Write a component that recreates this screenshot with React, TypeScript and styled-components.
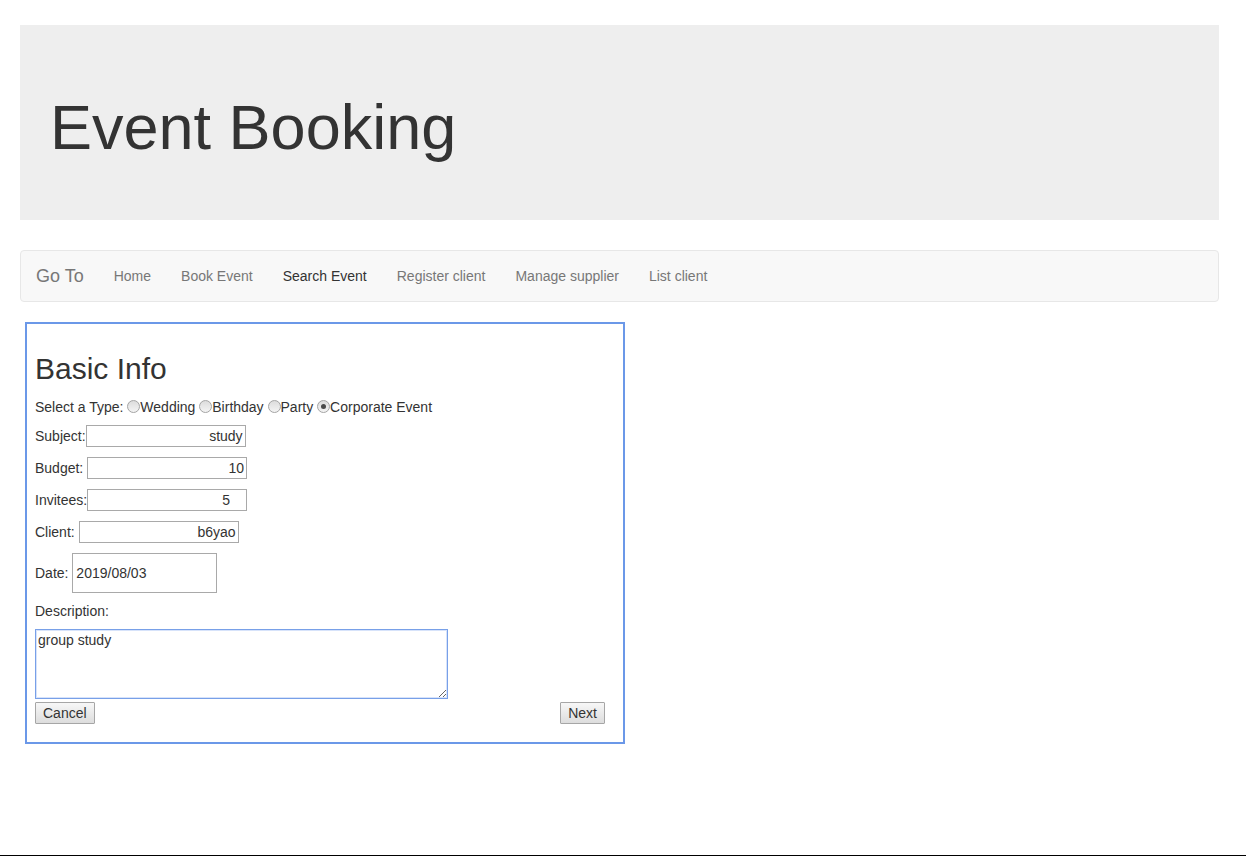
import React from "react";
import styled, { createGlobalStyle } from "styled-components";

const GlobalStyle = createGlobalStyle`
  html { height: 100%; }
  body {
    margin: 0;
    min-height: 100vh;
    box-sizing: border-box;
    border-bottom: 1px solid #000;
    background: #fff;
    font-family: "Liberation Sans", Arial, Helvetica, sans-serif;
    font-size: 14px;
    line-height: 1.42857143;
    color: #333;
  }
  * { box-sizing: border-box; }
`;

const Page = styled.div`
  padding: 25px 27px 0 20px;
`;

const Jumbotron = styled.header`
  background: #eeeeee;
  padding: 48px 30px;
  margin-bottom: 30px;
`;

const Title = styled.h1`
  margin: 20px 0 10px;
  font-size: 63px;
  line-height: 1.1;
  font-weight: 400;
  color: #333;
`;

const Navbar = styled.nav`
  display: flex;
  align-items: center;
  min-height: 52px;
  background: #f8f8f8;
  border: 1px solid #e7e7e7;
  border-radius: 4px;
  margin-bottom: 20px;
`;

const Brand = styled.span`
  padding: 15px;
  font-size: 18px;
  line-height: 20px;
  color: #777;
`;

const NavLink = styled.a<{ $active?: boolean }>`
  padding: 15px;
  line-height: 20px;
  color: ${(p) => (p.$active ? "#333" : "#777")};
  text-decoration: none;
`;

const Card = styled.section`
  width: 600px;
  margin-left: 5px;
  border: 2px solid #6b98e8;
  padding: 8px 8px 18px;
`;

const Heading = styled.h2`
  margin: 20px 0 12px;
  font-size: 30px;
  line-height: 1.1;
  font-weight: 400;
  color: #333;
`;

const TypeRow = styled.div`
  line-height: 20px;
  margin: 0 0 8px;
`;

const Radio = styled.input.attrs({ type: "radio" })`
  appearance: none;
  -webkit-appearance: none;
  width: 13px;
  height: 13px;
  margin: 0;
  border: 1px solid #a4a4a4;
  border-radius: 50%;
  background: linear-gradient(#dcdcdc, #f4f4f4);
  vertical-align: -1px;
  position: relative;
  &:checked::after {
    content: "";
    position: absolute;
    left: 3px;
    top: 3px;
    width: 5px;
    height: 5px;
    border-radius: 50%;
    background: #4a4a4a;
  }
`;

const FieldRow = styled.label<{ $tall?: boolean }>`
  display: flex;
  align-items: center;
  height: ${(p) => (p.$tall ? "40px" : "22px")};
  margin-bottom: ${(p) => (p.$tall ? "8px" : "10px")};
  white-space: pre;
`;

const TextInput = styled.input<{ $padRight?: number }>`
  width: 160px;
  height: 22px;
  border: 1px solid #a9a9a9;
  padding: 1px ${(p) => p.$padRight ?? 2}px 1px 2px;
  font-family: "Liberation Sans", Arial, sans-serif;
  font-size: 14px;
  color: #333;
  text-align: right;
  background: #fff;
  outline: none;
`;

const DateInput = styled.input`
  width: 145px;
  height: 40px;
  border: 1px solid #a9a9a9;
  padding: 0 3px;
  font-family: "Liberation Sans", Arial, sans-serif;
  font-size: 14px;
  color: #333;
  background: #fff;
  outline: none;
`;

const BlockLabel = styled.div`
  line-height: 20px;
  margin-bottom: 8px;
`;

const TextArea = styled.textarea`
  display: block;
  width: 413px;
  height: 70px;
  margin: 0 0 3px;
  border: 1px solid #78a0e8;
  box-shadow: 0 0 0 1px rgba(140, 175, 240, 0.35) inset;
  padding: 2px 2px;
  font-family: "Liberation Sans", Arial, sans-serif;
  font-size: 14px;
  line-height: 16px;
  color: #333;
  outline: none;
`;

const ButtonRow = styled.div`
  display: flex;
  justify-content: space-between;
  padding-right: 10px;
`;

const Button = styled.button`
  height: 22px;
  padding: 0 7px;
  border: 1px solid #a6a6a6;
  border-radius: 1px;
  background: linear-gradient(#f7f7f7, #dddddd);
  font-family: "Liberation Sans", Arial, sans-serif;
  font-size: 14px;
  color: #333;
`;

const links = ["Home", "Book Event", "Search Event", "Register client", "Manage supplier", "List client"];

export default function App() {
  return (
    <>
      <GlobalStyle />
      <Page>
        <Jumbotron>
          <Title>Event Booking</Title>
        </Jumbotron>
        <Navbar>
          <Brand>Go To</Brand>
          {links.map((l) => (
            <NavLink key={l} href="#" $active={l === "Search Event"}>
              {l}
            </NavLink>
          ))}
        </Navbar>
        <Card>
          <Heading>Basic Info</Heading>
          <TypeRow>
            Select a Type: <Radio name="type" />Wedding <Radio name="type" />Birthday{" "}
            <Radio name="type" />Party <Radio name="type" defaultChecked />Corporate Event
          </TypeRow>
          <FieldRow>
            Subject:<TextInput defaultValue="study" />
          </FieldRow>
          <FieldRow>
            Budget: <TextInput defaultValue="10" />
          </FieldRow>
          <FieldRow>
            Invitees:<TextInput defaultValue="5" $padRight={16} />
          </FieldRow>
          <FieldRow>
            Client: <TextInput defaultValue="b6yao" />
          </FieldRow>
          <FieldRow $tall>
            Date: <DateInput defaultValue="2019/08/03" />
          </FieldRow>
          <BlockLabel>Description:</BlockLabel>
          <TextArea defaultValue="group study" />
          <ButtonRow>
            <Button>Cancel</Button>
            <Button>Next</Button>
          </ButtonRow>
        </Card>
      </Page>
    </>
  );
}
